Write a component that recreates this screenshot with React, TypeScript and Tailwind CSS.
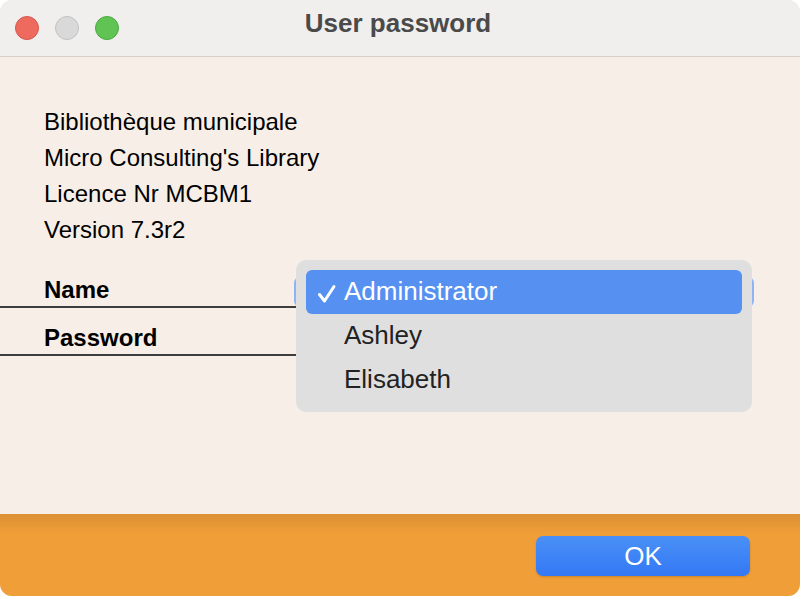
const App = () => {
  return (
    <div className="w-[800px] h-[596px] bg-white" style={{ fontFamily: '"Liberation Sans", Arial, sans-serif' }}>
      <div className="w-full h-full rounded-[12px] overflow-hidden flex flex-col bg-[#f7efe7]">
        {/* title bar */}
        <div className="relative h-[57px] shrink-0 bg-[#f0efed] border-b border-[#d6d0c8] flex items-center justify-center">
          <div className="absolute left-[15px] top-[16px] flex gap-[16px]">
            <span className="w-[24px] h-[24px] rounded-full bg-[#ee6a5f] border border-[#d5574d]" />
            <span className="w-[24px] h-[24px] rounded-full bg-[#d9d9d9] border border-[#c2c2c2]" />
            <span className="w-[24px] h-[24px] rounded-full bg-[#5fc454] border border-[#4ca842]" />
          </div>
          <span className="text-[26px] font-bold text-[#4a4a4a] -mt-[10px] -ml-[4px]">User password</span>
        </div>

        {/* body */}
        <div className="flex-1 relative">
          <div className="pt-[47px] pl-[44px] text-[24px] leading-[36px] text-black">
            <div>Bibliothèque municipale</div>
            <div>Micro Consulting's Library</div>
            <div>Licence Nr MCBM1</div>
            <div>Version 7.3r2</div>
          </div>

          <div className="mt-[12px] w-[296px]">
            <div className="h-[48px] border-b-2 border-[#3d3d3d] pl-[44px] pt-[16px] text-[24px] leading-[28px] font-bold text-black">Name</div>
            <div className="h-[48px] border-b-2 border-[#3d3d3d] pl-[44px] pt-[16px] text-[24px] leading-[28px] font-bold text-black">Password</div>
          </div>

          {/* select behind menu */}
          <div className="absolute left-[294px] top-[220px] w-[460px] h-[30px] rounded-[6px] bg-[#8fb4f5]" />

          {/* popup menu */}
          <div className="absolute left-[296px] top-[203px] w-[456px] h-[152px] rounded-[10px] bg-[#dfdfdf] p-[10px]">
            <div className="h-[44px] rounded-[6px] bg-[#5691f2] flex items-center text-white text-[26px]">
              <svg width="22" height="22" viewBox="0 0 22 22" className="ml-[10px] mr-[6px] mt-[3px]">
                <path d="M3.5 11.5 L8.5 18 L18 3.5" fill="none" stroke="white" strokeWidth="3" strokeLinecap="round" strokeLinejoin="round" />
              </svg>
              <span className="-mt-[2px]">Administrator</span>
            </div>
            <div className="h-[44px] flex items-center pl-[38px] text-[26px] text-[#222] -mt-[1px]">Ashley</div>
            <div className="h-[44px] flex items-center pl-[38px] text-[26px] text-[#222]">Elisabeth</div>
          </div>
        </div>

        {/* footer */}
        <div className="h-[82px] shrink-0 bg-[linear-gradient(to_bottom,#dc9034_0px,#f09e38_20px,#f09e38_100%)] flex justify-end items-start pt-[22px] pr-[50px]">
          <button className="w-[214px] h-[40px] rounded-[7px] bg-[linear-gradient(to_bottom,#4a90f6,#3478f5)] text-white text-[26px] shadow-[0_1px_2px_rgba(0,0,0,0.15)]">
            OK
          </button>
        </div>
      </div>
    </div>
  );
};

export default App;
